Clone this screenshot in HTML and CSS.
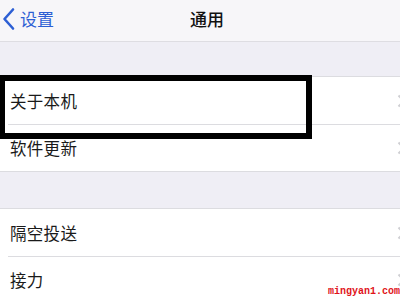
FILE: index.html
```html
<!DOCTYPE html>
<html lang="zh">
<head>
<meta charset="utf-8">
<link rel="stylesheet" href="styles.css">
</head>
<body>
<div class="screen">
  <header class="nav">
    <div class="back">
      <svg class="back-icon" width="13" height="24" viewBox="0 0 13 24"><path d="M11 2.5 L2.5 12 L11 21.5" fill="none" stroke="#2d5fd4" stroke-width="2.6" stroke-linecap="round" stroke-linejoin="round"/></svg>
      <span>设置</span>
    </div>
    <div class="title">通用</div>
  </header>
  <div class="spacer first"></div>
  <section class="group">
    <div class="row"><span class="label">关于本机</span><svg class="chev" width="9" height="14" viewBox="0 0 9 14"><path d="M1.5 1.5 L7 7 L1.5 12.5" fill="none" stroke="#cfcfd3" stroke-width="2"/></svg></div>
    <div class="row"><span class="label">软件更新</span><svg class="chev" width="9" height="14" viewBox="0 0 9 14"><path d="M1.5 1.5 L7 7 L1.5 12.5" fill="none" stroke="#cfcfd3" stroke-width="2"/></svg></div>
  </section>
  <div class="spacer"></div>
  <section class="group">
    <div class="row"><span class="label">隔空投送</span><svg class="chev" width="9" height="14" viewBox="0 0 9 14"><path d="M1.5 1.5 L7 7 L1.5 12.5" fill="none" stroke="#cfcfd3" stroke-width="2"/></svg></div>
    <div class="row"><span class="label">接力</span><svg class="chev" width="9" height="14" viewBox="0 0 9 14"><path d="M1.5 1.5 L7 7 L1.5 12.5" fill="none" stroke="#cfcfd3" stroke-width="2"/></svg></div>
  </section>
  <div class="highlight"></div>
  <div class="watermark">mingyan1.com</div>
</div>
</body>
</html>
```
FILE: styles.css
```css
html, body {
  margin: 0;
  padding: 0;
}
body {
  width: 400px;
  height: 300px;
  overflow: hidden;
  font-family: "Noto Sans CJK SC", "Noto Sans", sans-serif;
  background: #efeef5;
}
.screen {
  position: relative;
  width: 400px;
  height: 300px;
  overflow: hidden;
}
.nav {
  position: relative;
  height: 41px;
  background: #f7f6f9;
  border-bottom: 1px solid #dedde2;
  display: flex;
  align-items: center;
}
.back {
  display: flex;
  align-items: center;
  gap: 5px;
  padding-left: 2px;
  margin-top: -4px;
  color: #2d5fd4;
  font-size: 17px;
}
.back span {
  line-height: 20px;
}
.title {
  position: absolute;
  left: 0;
  right: 0;
  top: 0;
  height: 41px;
  line-height: 38px;
  text-align: center;
  font-size: 17px;
  font-weight: 500;
  color: #111;
  pointer-events: none;
  padding-left: 14px;
}
.spacer {
  height: 36px;
}
.spacer.first {
  height: 34px;
}
.group {
  background: #fff;
  border-top: 1px solid #dcdce0;
  border-bottom: 1px solid #dcdce0;
}
.row {
  height: 47px;
  display: flex;
  align-items: center;
  justify-content: space-between;
  padding-left: 10px;
  position: relative;
}
.row + .row::before {
  content: "";
  position: absolute;
  left: 8px;
  right: 0;
  top: 0;
  border-top: 1px solid #dcdce0;
}
.label {
  font-size: 16.5px;
  color: #1a1a1a;
  letter-spacing: 0.3px;
}
.chev {
  margin-right: -6px;
}
.highlight {
  position: absolute;
  left: -1px;
  top: 75px;
  width: 301px;
  height: 52px;
  border: 6px solid #000;
}
.watermark {
  position: absolute;
  left: 328px;
  top: 286px;
  font-family: "Liberation Mono", monospace;
  font-weight: bold;
  font-size: 10px;
  color: #e0141a;
  white-space: nowrap;
}
```
